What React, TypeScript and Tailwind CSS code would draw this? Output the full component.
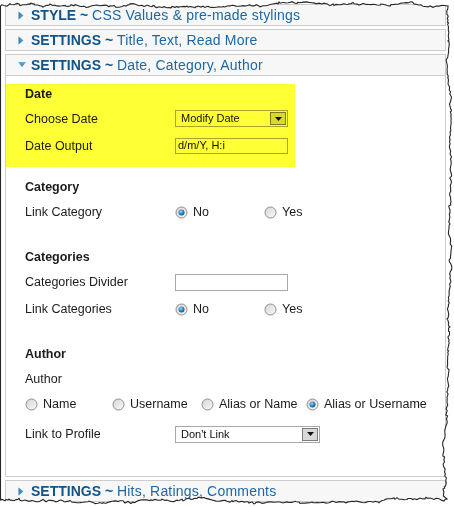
import React from "react";

const FONT = "font-['Liberation_Sans',Arial,sans-serif]";

// small deterministic generator so the torn edge is stable between renders
function makeRng(seed: number) {
  let s = seed;
  return () => {
    s = (s * 16807) % 2147483647;
    return (s - 1) / 2147483646;
  };
}

function tornOutline(): string {
  const r = makeRng(1234567);
  const pts: [number, number][] = [];
  let drift = 0;
  const walk = (lo: number, hi: number) => {
    drift += (r() - 0.5) * 1.6;
    if (drift < lo) drift = lo;
    if (drift > hi) drift = hi;
    return drift + (r() - 0.5) * 1.6;
  };
  pts.push([0.5, 6]);
  drift = 5;
  for (let x = 2; x < 444; x += 1 + Math.floor(r() * 3)) pts.push([x, walk(2.5, 7)]);
  drift = 447;
  for (let y = 6; y < 498; y += 1 + Math.floor(r() * 3)) pts.push([walk(443, 451), y]);
  drift = 499;
  for (let x = 447; x > 1; x -= 1 + Math.floor(r() * 3)) pts.push([x, walk(496, 503)]);
  pts.push([0.5, 500]);
  return "M" + pts.map(([x, y]) => `${x.toFixed(1)} ${y.toFixed(1)}`).join(" L") + " Z";
}

function TornEdge() {
  const d = tornOutline();
  return (
    <svg className="absolute inset-0 pointer-events-none" width={454} height={507} viewBox="0 0 454 507">
      <path d={`M0 0 H454 V507 H0 Z ${d}`} fill="#ffffff" fillRule="evenodd" />
      <path d={d} fill="none" stroke="#262626" strokeWidth={1.1} />
    </svg>
  );
}

function Arrow({ open }: { open?: boolean }) {
  return open ? (
    <svg width={8} height={6} viewBox="0 0 8 6" className="shrink-0">
      <defs>
        <linearGradient id="dn" x1="0" y1="0" x2="0" y2="1">
          <stop offset="0" stopColor="#5fb0e0" />
          <stop offset="1" stopColor="#2d85c0" />
        </linearGradient>
      </defs>
      <polygon points="0,0 8,0 4,5" fill="url(#dn)" />
    </svg>
  ) : (
    <svg width={6} height={9} viewBox="0 0 6 9" className="shrink-0">
      <defs>
        <linearGradient id="rt" x1="0" y1="0" x2="1" y2="0">
          <stop offset="0" stopColor="#2a7cb4" />
          <stop offset="1" stopColor="#56a6d8" />
        </linearGradient>
      </defs>
      <polygon points="0.5,0.5 5.5,4.5 0.5,8.5" fill="url(#rt)" />
    </svg>
  );
}

function Header({ title, sub, open }: { title: string; sub: string; open?: boolean }) {
  return (
    <div className="h-[20px] flex items-center bg-[#f7f7f7]">
      <div className="w-[25px] pl-[12px] flex items-center">
        <Arrow open={open} />
      </div>
      <span className="text-[14px] leading-[16px] whitespace-nowrap">
        <span className="font-bold text-[#105488]">{title} ~ </span>
        <span className="text-[#1c68a6] tracking-[0.2px]">{sub}</span>
      </span>
    </div>
  );
}

function Radio({ checked }: { checked?: boolean }) {
  return (
    <svg width={13} height={13} viewBox="0 0 13 13" className="shrink-0">
      <defs>
        <linearGradient id="rb" x1="0" y1="0" x2="1" y2="1">
          <stop offset="0" stopColor="#d6d6d6" />
          <stop offset="1" stopColor="#f9f9f9" />
        </linearGradient>
        <radialGradient id="rd" cx="0.4" cy="0.35" r="0.7">
          <stop offset="0" stopColor="#9fd7f7" />
          <stop offset="0.5" stopColor="#2d8fcf" />
          <stop offset="1" stopColor="#0d4f86" />
        </radialGradient>
      </defs>
      <circle cx={6.5} cy={6.5} r={5.5} fill="url(#rb)" stroke="#8c8c8c" strokeWidth={1} />
      {checked && <circle cx={6.5} cy={6.5} r={3} fill="url(#rd)" />}
    </svg>
  );
}

function Option({ label, checked, w }: { label: string; checked?: boolean; w: string }) {
  return (
    <div className={`flex items-center gap-[5px] ${w}`}>
      <Radio checked={checked} />
      <span>{label}</span>
    </div>
  );
}

function Select({ value, w }: { value: string; w: string }) {
  return (
    <div className={`h-[17px] ${w} border border-[#a7a7a7] bg-white flex items-center pl-[5px] pr-[1px]`}>
      <span className="flex-1 text-[11px] leading-[13px] text-[#111]">{value}</span>
      <div className="w-[16px] h-[13px] border border-[#7c7c7c] bg-[#d8d8d8] flex items-center justify-center">
        <svg width={7} height={4} viewBox="0 0 7 4">
          <polygon points="0,0 7,0 3.5,4" fill="#111" />
        </svg>
      </div>
    </div>
  );
}

function TextBox({ value, w, h }: { value?: string; w: string; h: string }) {
  return (
    <div className={`${h} ${w} border border-[#a7a7a7] bg-white flex items-center pl-[2px] text-[11px] leading-[13px] text-[#111]`}>
      {value}
    </div>
  );
}

function Row({ label, h, mt, children }: { label: string; h: string; mt?: string; children?: React.ReactNode }) {
  return (
    <div className={`flex items-center ${h} ${mt ?? ""}`}>
      <div className="w-[150px] shrink-0">{label}</div>
      {children}
    </div>
  );
}

function Heading({ text, h, mt }: { text: string; h: string; mt?: string }) {
  return <div className={`flex items-center font-bold ${h} ${mt ?? ""}`}>{text}</div>;
}

export default function App() {
  return (
    <div className={`relative w-[454px] h-[507px] overflow-hidden bg-white ${FONT}`}>
      <div className="pl-[5px] pt-[4px] w-[446px]">
        <div className="border border-[#cdcdcd]">
          <Header title="STYLE" sub="CSS Values & pre-made stylings" />
        </div>
        <div className="mt-[3px] border border-[#cdcdcd]">
          <Header title="SETTINGS" sub="Title, Text, Read More" />
        </div>
        <div className="mt-[3px] border border-[#cdcdcd]">
          <div className="border-b border-[#cdcdcd]">
            <Header title="SETTINGS" sub="Date, Category, Author" open />
          </div>
          <div className="bg-white h-[400px] pt-[8px] text-[12.5px] leading-[14px] text-[#1b1b1b]">
            {/* date group, with a highlighter wash laid over it */}
            <div className="relative w-[289px] h-[83px] pl-[19px]">
              <Heading text="Date" h="h-[20px]" />
              <Row label="Choose Date" h="h-[29px]">
                <Select value="Modify Date" w="w-[113px]" />
              </Row>
              <Row label="Date Output" h="h-[25px]">
                <TextBox value="d/m/Y, H:i" w="w-[113px]" h="h-[16px]" />
              </Row>
              <div className="absolute inset-0 bg-[#ffff36] mix-blend-multiply pointer-events-none" />
            </div>

            <div className="pl-[19px]">
              <Heading text="Category" h="h-[20px]" mt="mt-[10px]" />
              <Row label="Link Category" h="h-[24px]" mt="mt-[3px]">
                <Option label="No" checked w="w-[89px]" />
                <Option label="Yes" w="w-[60px]" />
              </Row>

              <Heading text="Categories" h="h-[20px]" mt="mt-[23px]" />
              <Row label="Categories Divider" h="h-[24px]" mt="mt-[3px]">
                <TextBox w="w-[113px]" h="h-[17px]" />
              </Row>
              <Row label="Link Categories" h="h-[24px]" mt="mt-[3px]">
                <Option label="No" checked w="w-[89px]" />
                <Option label="Yes" w="w-[60px]" />
              </Row>

              <Heading text="Author" h="h-[20px]" mt="mt-[23px]" />
              <div className="flex items-center h-[24px] mt-[3px]">Author</div>
              <div className="flex items-center h-[24px] mt-[1px]">
                <Option label="Name" w="w-[87px]" />
                <Option label="Username" w="w-[89px]" />
                <Option label="Alias or Name" w="w-[105px]" />
                <Option label="Alias or Username" checked w="w-[125px]" />
              </div>
              <Row label="Link to Profile" h="h-[24px]" mt="mt-[6px]">
                <Select value="Don't Link" w="w-[145px]" />
              </Row>
            </div>
          </div>
        </div>
        <div className="mt-[3px] border border-[#cdcdcd]">
          <Header title="SETTINGS" sub="Hits, Ratings, Comments" />
        </div>
      </div>
      <TornEdge />
    </div>
  );
}
